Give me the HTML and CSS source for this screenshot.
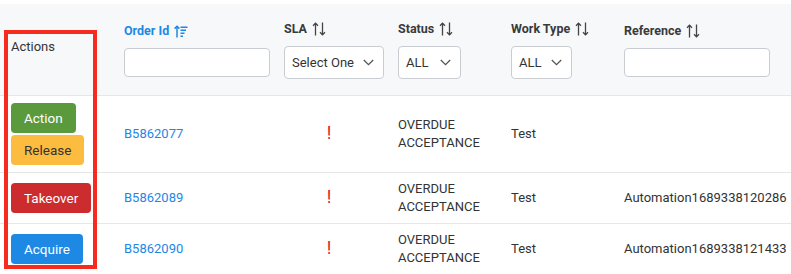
FILE: index.html
```html
<!DOCTYPE html>
<html>
<head>
<meta charset="utf-8">
<link rel="stylesheet" href="styles.css">
</head>
<body>
<div class="page">
  <table class="grid">
    <colgroup>
      <col class="c-actions"><col class="c-order"><col class="c-sla"><col class="c-status"><col class="c-work"><col class="c-ref">
    </colgroup>
    <thead>
      <tr>
        <th class="th-actions">Actions</th>
        <th>
          <div class="th-title active">Order Id
            <svg class="sort" width="14" height="13" viewBox="0 0 14 13"><g fill="none" stroke="#1e88e5" stroke-width="1.5"><path d="M3 12.5V1.2"/><path d="M0.6 3.6L3 1.2L5.4 3.6"/><path d="M6.5 2.2H13.5M6.5 5.2H12M6.5 8.2H10.5M6.5 11.2H9"/></g></svg>
          </div>
          <input class="field" type="text">
        </th>
        <th>
          <div class="th-title">SLA
            <svg class="sort" width="14" height="14" viewBox="0 0 14 14"><g fill="none" stroke="#444" stroke-width="1.3"><path d="M3.5 13.5V1.2"/><path d="M1 3.7L3.5 1.2L6 3.7"/><path d="M10.5 0.5V12.8"/><path d="M8 10.3L10.5 12.8L13 10.3"/></g></svg>
          </div>
          <div class="select w-sla"><span>Select One</span><svg width="11" height="7" viewBox="0 0 11 7"><path d="M0.8 1L5.5 5.7L10.2 1" fill="none" stroke="#555" stroke-width="1.3"/></svg></div>
        </th>
        <th>
          <div class="th-title">Status
            <svg class="sort" width="14" height="14" viewBox="0 0 14 14"><g fill="none" stroke="#444" stroke-width="1.3"><path d="M3.5 13.5V1.2"/><path d="M1 3.7L3.5 1.2L6 3.7"/><path d="M10.5 0.5V12.8"/><path d="M8 10.3L10.5 12.8L13 10.3"/></g></svg>
          </div>
          <div class="select w-status"><span>ALL</span><svg width="11" height="7" viewBox="0 0 11 7"><path d="M0.8 1L5.5 5.7L10.2 1" fill="none" stroke="#555" stroke-width="1.3"/></svg></div>
        </th>
        <th>
          <div class="th-title">Work Type
            <svg class="sort" width="14" height="14" viewBox="0 0 14 14"><g fill="none" stroke="#444" stroke-width="1.3"><path d="M3.5 13.5V1.2"/><path d="M1 3.7L3.5 1.2L6 3.7"/><path d="M10.5 0.5V12.8"/><path d="M8 10.3L10.5 12.8L13 10.3"/></g></svg>
          </div>
          <div class="select w-work"><span>ALL</span><svg width="11" height="7" viewBox="0 0 11 7"><path d="M0.8 1L5.5 5.7L10.2 1" fill="none" stroke="#555" stroke-width="1.3"/></svg></div>
        </th>
        <th>
          <div class="th-title">Reference
            <svg class="sort" width="14" height="14" viewBox="0 0 14 14"><g fill="none" stroke="#444" stroke-width="1.3"><path d="M3.5 13.5V1.2"/><path d="M1 3.7L3.5 1.2L6 3.7"/><path d="M10.5 0.5V12.8"/><path d="M8 10.3L10.5 12.8L13 10.3"/></g></svg>
          </div>
          <input class="field" type="text">
        </th>
      </tr>
    </thead>
    <tbody>
      <tr>
        <td class="td-actions">
          <div class="btns">
            <button class="btn btn-green">Action</button>
            <button class="btn btn-yellow">Release</button>
          </div>
        </td>
        <td><a class="link">B5862077</a></td>
        <td class="sla"><span class="bang">!</span></td>
        <td>OVERDUE<br>ACCEPTANCE</td>
        <td>Test</td>
        <td></td>
      </tr>
      <tr>
        <td class="td-actions">
          <div class="btns"><button class="btn btn-red">Takeover</button></div>
        </td>
        <td><a class="link">B5862089</a></td>
        <td class="sla"><span class="bang">!</span></td>
        <td>OVERDUE<br>ACCEPTANCE</td>
        <td>Test</td>
        <td>Automation1689338120286</td>
      </tr>
      <tr>
        <td class="td-actions">
          <div class="btns"><button class="btn btn-blue">Acquire</button></div>
        </td>
        <td><a class="link">B5862090</a></td>
        <td class="sla"><span class="bang">!</span></td>
        <td>OVERDUE<br>ACCEPTANCE</td>
        <td>Test</td>
        <td>Automation1689338121433</td>
      </tr>
    </tbody>
  </table>
  <div class="highlight"></div>
</div>
</body>
</html>
```
FILE: styles.css
```css
html, body {
  margin: 0;
  padding: 0;
  background: #fff;
}
body {
  font-family: Roboto, "Liberation Sans", Arial, sans-serif;
  font-size: 13px;
  color: #333;
  overflow: hidden;
}
.page {
  position: relative;
  padding-top: 4px;
  width: 791px;
  height: 270px;
}
.grid {
  width: 791px;
  border-collapse: collapse;
  table-layout: fixed;
}
.c-actions { width: 112px; }
.c-order { width: 160px; }
.c-sla { width: 114px; }
.c-status { width: 113px; }
.c-work { width: 113px; }
.c-ref { width: 179px; }

thead th {
  background: #f7f8fa;
  text-align: left;
  vertical-align: middle;
  padding: 16px 12px 16px 12px;
  border-bottom: 1px solid #e4e6e9;
  font-weight: 400;
}
thead th.th-actions {
  padding: 15px 11px 21px 11px;
  font-size: 13px;
  color: #333;
  line-height: 18px;
}
.th-title {
  display: flex;
  align-items: center;
  gap: 5px;
  height: 18px;
  line-height: 18px;
  font-weight: 700;
  font-size: 12.5px;
  color: #3a3a3a;
  margin-bottom: 8px;
  white-space: nowrap;
}
.th-title.active {
  color: #1e88e5;
}
.sort {
  display: block;
  flex: none;
}
.field {
  display: block;
  box-sizing: border-box;
  width: 146px;
  height: 29px;
  border: 1px solid #c9cdd2;
  border-radius: 4px;
  background: #fff;
  margin: 0;
  padding: 0 6px;
  font: inherit;
}
.select {
  display: flex;
  align-items: center;
  justify-content: space-between;
  box-sizing: border-box;
  height: 33px;
  border: 1px solid #c9cdd2;
  border-radius: 4px;
  background: #fff;
  padding: 0 9px 0 7px;
  font-size: 13px;
  font-weight: 400;
  color: #333;
  white-space: nowrap;
}
.select svg { flex: none; }
.w-sla { width: 100px; }
.w-status { width: 63px; }
.w-work { width: 61px; }

tbody td {
  padding: 7px 12px;
  line-height: 18px;
  vertical-align: middle;
  border-bottom: 1px solid #e6e7e9;
  color: #333;
  white-space: nowrap;
}
tbody td.td-actions {
  padding-left: 11px;
}
.btns {
  display: flex;
  flex-direction: column;
  align-items: flex-start;
  gap: 2px;
}
.btn {
  height: 30px;
  border: none;
  border-radius: 4px;
  padding: 0 13px;
  font-family: Roboto, "Liberation Sans", Arial, sans-serif;
  font-size: 13.5px;
  font-weight: 400;
  color: #fff;
  margin: 0;
}
.btn-green { background: #5b9a3c; }
.btn-yellow { background: #fbbc3f; color: #333; }
.btn-red { background: #cc2c2e; }
.btn-blue { background: #1e88e5; }
.link {
  color: #1e88e5;
  text-decoration: none;
}
.sla {
  text-align: center;
}
.bang {
  color: #e8211f;
  font-size: 18px;
  font-weight: 400;
}
.highlight {
  position: absolute;
  left: 4px;
  top: 30px;
  width: 93px;
  height: 239px;
  box-sizing: border-box;
  border: 4px solid #f42b1e;
  pointer-events: none;
}
```
